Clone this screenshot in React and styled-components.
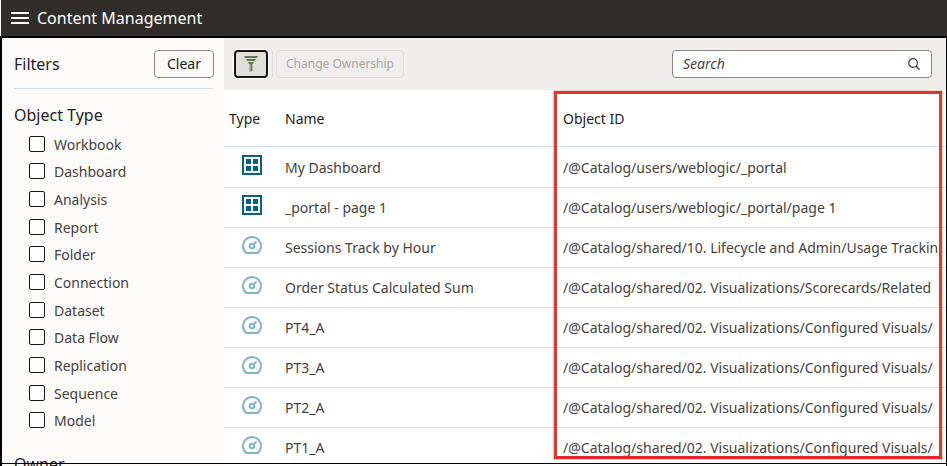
import React, { useState } from 'react'
import styled, { createGlobalStyle } from 'styled-components'

const GlobalStyle = createGlobalStyle`
  * {
    box-sizing: border-box;
  }
  body {
    margin: 0;
    background: #fff;
    color: #24211f;
    font-family: "Noto Sans", "Open Sans", sans-serif;
    font-size: 14px;
    line-height: 20px;
  }
  button, input {
    font: inherit;
    color: inherit;
  }
`

const Page = styled.div`
  display: flex;
  flex-direction: column;
  height: 100vh;
  overflow: hidden;
`

const Header = styled.header`
  display: flex;
  align-items: center;
  gap: 8px;
  flex: none;
  height: 36px;
  margin-left: 1px;
  padding: 0 10px;
  background: #312d2a;
  color: #fff;
`

const MenuButton = styled.button`
  display: flex;
  padding: 0;
  border: 0;
  background: none;
`

const PageTitle = styled.h1`
  margin: 0;
  font-size: 16px;
  font-weight: 400;
`

const Body = styled.div`
  position: relative;
  display: flex;
  flex: 1;
  min-height: 0;
  border: solid #000;
  border-width: 2px 1px 0 2px;
`

const BottomLine = styled.div`
  position: absolute;
  left: 0;
  right: 0;
  bottom: 2px;
  height: 1px;
  background: #000;
`

const Sidebar = styled.aside`
  flex: none;
  width: 222px;
  padding: 0 10px 0 12px;
  overflow: hidden;
  background: #fcfbfa;
`

const FiltersBar = styled.div`
  display: flex;
  align-items: center;
  justify-content: space-between;
  height: 51px;
  padding-top: 2px;
  border-bottom: 1px solid #d4dfe7;
`

const Heading = styled.h2`
  margin: 0;
  font-size: 16px;
  font-weight: 400;
  line-height: 24px;
`

const Group = styled.section`
  padding-top: 14px;

  & + & {
    padding-top: 18px;
  }
`

const CheckList = styled.ul`
  display: grid;
  grid-auto-rows: 1fr;
  height: 304px;
  margin: 3px 0 0;
  padding: 0 0 0 15px;
  list-style: none;
`

const CheckLabel = styled.label`
  display: flex;
  align-items: center;
  gap: 9px;
  height: 100%;
  color: #45413d;
  line-height: 16px;
`

const CheckText = styled.span`
  padding-top: 2px;
`

const Checkbox = styled.input`
  appearance: none;
  width: 16px;
  height: 16px;
  margin: 0;
  border: 1px solid #161513;
  border-radius: 2px;
  background: #fff;

  &:checked {
    background: #161513;
  }
`

const Button = styled.button`
  height: 28px;
  padding: 0 9px;
  border: 1px solid #8b8580;
  border-radius: 4px;
  background: transparent;
  font-size: ${(props) => (props.$small ? 12 : 14)}px;

  &:disabled {
    border-color: #e0dedc;
    color: #a9a6a3;
  }
`

const ClearButton = styled(Button)`
  width: 60px;
`

const Main = styled.main`
  position: relative;
  flex: 1;
  min-width: 0;
  overflow: hidden;
`

const Toolbar = styled.div`
  display: flex;
  align-items: center;
  gap: 4px;
  height: 52px;
  padding: 0 14px 0 10px;
  background: #efeeed;
`

const FilterToggle = styled.button`
  display: flex;
  align-items: center;
  justify-content: center;
  width: 34px;
  height: 28px;
  padding: 0;
  border: 2px solid #161513;
  border-radius: 4px;
  background: #dfdedb;
  box-shadow: 0 0 0 1px #fff;
`

const Separator = styled.span`
  width: 1px;
  height: 26px;
  margin-right: -1px;
  background: #e0dedc;
`

const SearchBox = styled.div`
  display: flex;
  align-items: center;
  width: 260px;
  height: 28px;
  margin-left: auto;
  padding: 0 11px 0 10px;
  border: 1px solid #8b8580;
  border-radius: 4px;
  background: #fff;
`

const SearchInput = styled.input`
  flex: 1;
  min-width: 0;
  padding: 0;
  border: 0;
  outline: 0;
  background: none;

  &::placeholder {
    color: #45413d;
    font-style: italic;
    opacity: 1;
  }
`

const Table = styled.table`
  width: 100%;
  table-layout: fixed;
  border-collapse: separate;
  border-spacing: 0;
`

const Th = styled.th`
  width: ${(props) => props.$width || 'auto'};
  height: 57px;
  padding: 2px 5px 0;
  border-bottom: 1px solid #d4dfe7;
  font-weight: 400;
  text-align: left;
`

const Row = styled.tr`
  height: 40px;

  &:first-child {
    height: 41px;
  }
`

const Td = styled.td`
  padding: 1px 0 0 5px;
  border-bottom: 1px solid #dfe0e1;
  color: #45413d;
  white-space: nowrap;
`

const IconTd = styled(Td)`
  padding: 0 0 5px;
  text-align: center;

  svg {
    display: block;
    margin: 0 auto;
  }
`

const Highlight = styled.div`
  position: absolute;
  top: 53px;
  left: 330px;
  right: 4px;
  bottom: 7px;
  border: 3px solid #d23a2c;
  border-color: #d8382c #cf4630 #e3262a #dd3a30;
  box-shadow: 0 0 0 1px rgba(205, 120, 90, 0.35);
  pointer-events: none;
`

const MenuIcon = () => (
  <svg width="18" height="14" viewBox="0 0 18 14" aria-hidden="true">
    <path d="M0 2h18M0 7h18M0 12h18" stroke="#fff" strokeWidth="2" />
  </svg>
)

const FunnelIcon = () => (
  <svg width="14" height="16" viewBox="0 0 14 16" aria-hidden="true">
    <path d="M0 0h14l-1 2H1zM2 3h10l-1 2H3zM4 6h6l-1 2H5z" fill="#5f7d4f" />
    <path d="M5.500 8h3v7l-3 1z" fill="#8b9a7e" />
    <path d="M7.500 8v7" stroke="#5f7d4f" strokeWidth="1" />
  </svg>
)

const SearchIcon = () => (
  <svg width="12" height="12" viewBox="0 0 12 12" fill="none" stroke="#3a3632" aria-hidden="true">
    <circle cx="5" cy="5" r="4.3" strokeWidth="1.2" />
    <path d="M8 8l3.5 3.5" strokeWidth="1.4" />
  </svg>
)

const DashboardIcon = () => (
  <svg width="20" height="20" viewBox="0 0 20 20" aria-label="Dashboard">
    <rect x="1" y="1" width="18" height="18" fill="#fff" stroke="#04628a" strokeWidth="2" />
    <path d="M4 4h5v5H4zM11 4h5v5h-5zM4 11h5v5H4zM11 11h5v5h-5z" fill="#04628a" />
  </svg>
)

const AnalysisIcon = () => (
  <svg width="20" height="20" viewBox="0 0 20 20" fill="none" stroke="#7fb3ca" aria-label="Analysis">
    <path d="M4.300 18A9 9 0 1 1 15.700 18z" strokeWidth="2" strokeLinejoin="round" />
    <circle cx="10" cy="11" r="2.200" strokeWidth="2" />
    <path d="M11.500 9.500l3-3" strokeWidth="2" />
  </svg>
)

const objectTypes = [
  'Workbook', 'Dashboard', 'Analysis', 'Report', 'Folder', 'Connection',
  'Dataset', 'Data Flow', 'Replication', 'Sequence', 'Model',
]

const shared = '/@Catalog/shared/02. Visualizations/'

const items = [
  { type: 'dashboard', name: 'My Dashboard', id: '/@Catalog/users/weblogic/_portal' },
  { type: 'dashboard', name: '_portal - page 1', id: '/@Catalog/users/weblogic/_portal/page 1' },
  { type: 'analysis', name: 'Sessions Track by Hour', id: '/@Catalog/shared/10. Lifecycle and Admin/Usage Trackin' },
  { type: 'analysis', name: 'Order Status Calculated Sum', id: shared + 'Scorecards/Related' },
  { type: 'analysis', name: 'PT4_A', id: shared + 'Configured Visuals/' },
  { type: 'analysis', name: 'PT3_A', id: shared + 'Configured Visuals/' },
  { type: 'analysis', name: 'PT2_A', id: shared + 'Configured Visuals/' },
  { type: 'analysis', name: 'PT1_A', id: shared + 'Configured Visuals/' },
]

const App = () => {
  const [checked, setChecked] = useState([])
  const [search, setSearch] = useState('')

  const toggle = (type) => {
    setChecked(checked.includes(type) ? checked.filter((t) => t !== type) : [...checked, type])
  }

  return (
    <Page>
      <GlobalStyle />
      <Header>
        <MenuButton aria-label="Menu"><MenuIcon /></MenuButton>
        <PageTitle>Content Management</PageTitle>
      </Header>
      <Body>
        <Sidebar>
          <FiltersBar>
            <Heading>Filters</Heading>
            <ClearButton onClick={() => setChecked([])}>Clear</ClearButton>
          </FiltersBar>
          <Group>
            <Heading>Object Type</Heading>
            <CheckList>
              {objectTypes.map((type) => (
                <li key={type}>
                  <CheckLabel>
                    <Checkbox
                      type="checkbox"
                      checked={checked.includes(type)}
                      onChange={() => toggle(type)}
                    />
                    <CheckText>{type}</CheckText>
                  </CheckLabel>
                </li>
              ))}
            </CheckList>
          </Group>
          <Group>
            <Heading>Owner</Heading>
          </Group>
        </Sidebar>
        <Main>
          <Toolbar>
            <FilterToggle aria-label="Toggle filters"><FunnelIcon /></FilterToggle>
            <Separator />
            <Button $small disabled>Change Ownership</Button>
            <SearchBox>
              <SearchInput
                type="text"
                aria-label="Search"
                placeholder="Search"
                value={search}
                onChange={(e) => setSearch(e.target.value)}
              />
              <SearchIcon />
            </SearchBox>
          </Toolbar>
          <Table>
            <thead>
              <tr>
                <Th $width="56px">Type</Th>
                <Th $width="278px">Name</Th>
                <Th>Object ID</Th>
              </tr>
            </thead>
            <tbody>
              {items.map((item) => (
                <Row key={item.name}>
                  <IconTd>{item.type === 'dashboard' ? <DashboardIcon /> : <AnalysisIcon />}</IconTd>
                  <Td>{item.name}</Td>
                  <Td>{item.id}</Td>
                </Row>
              ))}
            </tbody>
          </Table>
          <Highlight />
        </Main>
        <BottomLine />
      </Body>
    </Page>
  )
}

export default App
